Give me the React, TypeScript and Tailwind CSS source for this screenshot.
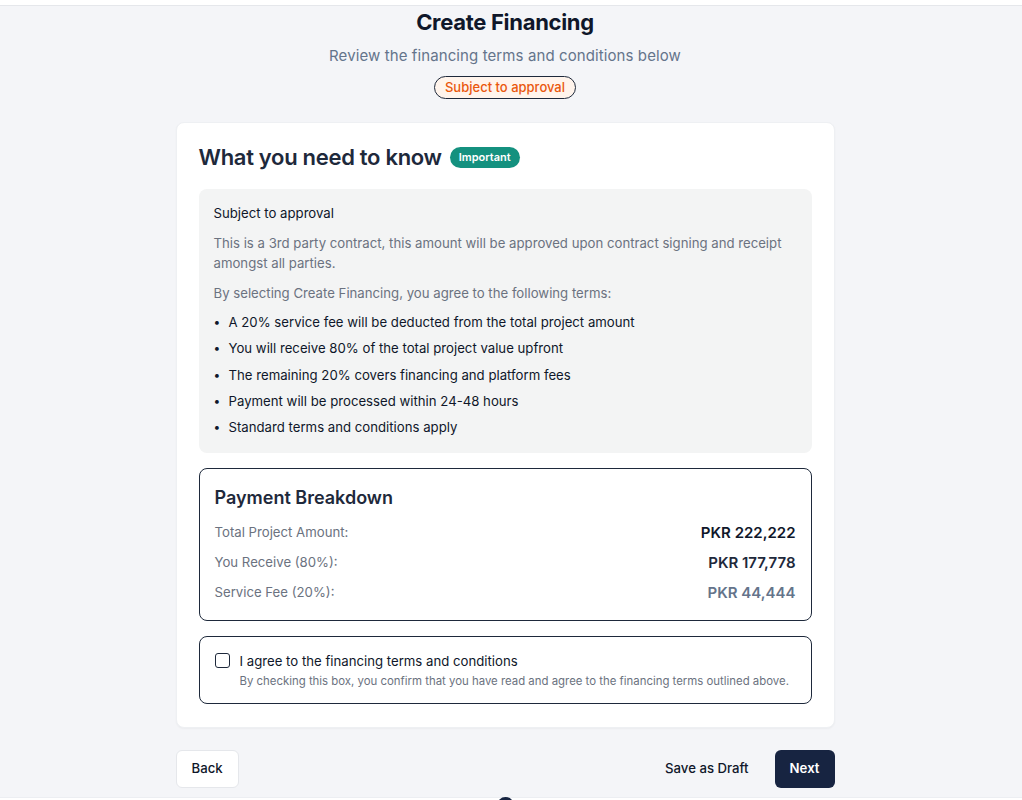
import React, { useState } from "react";

const terms = [
  "A 20% service fee will be deducted from the total project amount",
  "You will receive 80% of the total project value upfront",
  "The remaining 20% covers financing and platform fees",
  "Payment will be processed within 24-48 hours",
  "Standard terms and conditions apply",
];

const breakdown = [
  { label: "Total Project Amount:", value: "PKR 222,222", cls: "text-[#0f172a]" },
  { label: "You Receive (80%):", value: "PKR 177,778", cls: "text-[#1e293b]" },
  { label: "Service Fee (20%):", value: "PKR 44,444", cls: "text-[#64748b]" },
];

export default function App() {
  const [agreed, setAgreed] = useState(false);

  return (
    <div
      className="w-full h-[800px] overflow-hidden flex flex-col bg-[#f4f5f8]"
      style={{ fontFamily: "Inter, 'Noto Sans', sans-serif" }}
    >
      {/* Top bar */}
      <div className="h-[6px] bg-white border-b border-[#e5e7eb] shrink-0" />

      <div className="w-[1010px] flex flex-col items-center flex-1">
        {/* Header */}
        <h1 className="mt-[2px] text-[22px] leading-[28px] font-bold tracking-[-0.3px] text-[#0f172a]">
          Create Financing
        </h1>
        <p className="mt-[10px] text-[15px] leading-[20px] tracking-[0.1px] text-[#64748b]">
          Review the financing terms and conditions below
        </p>
        <span className="mt-[10px] h-[23px] px-[10px] flex items-center rounded-full border border-[#1e293b] bg-[#fff4ec] text-[13px] font-medium text-[#ea580c]">
          Subject to approval
        </span>

        {/* Card */}
        <div className="mt-[23px] w-[659px] bg-white rounded-lg border border-[#eef0f3] shadow-[0_1px_2px_rgba(0,0,0,0.04)] px-[22px] pt-[20px] pb-[23px]">
          <div className="flex items-center gap-[8px]">
            <h2 className="text-[22px] leading-[28px] font-semibold tracking-[-0.3px] text-[#1e293b]">
              What you need to know
            </h2>
            <span className="h-[21px] px-[9px] flex items-center rounded-full bg-[#14917f] text-white text-[11px] font-semibold">
              Important
            </span>
          </div>

          {/* Info box */}
          <div className="mt-[18px] bg-[#f3f4f4] rounded-lg px-[15px] pt-[15px] pb-[16px]">
            <p className="text-[13.2px] leading-[18px] text-[#0f172a]">Subject to approval</p>
            <p className="mt-[11px] text-[13.2px] leading-[20px] text-[#6b7280]">
              This is a 3rd party contract, this amount will be approved upon contract signing and receipt
              amongst all parties.
            </p>
            <p className="mt-[10px] text-[13.2px] leading-[20px] text-[#6b7280]">
              By selecting Create Financing, you agree to the following terms:
            </p>
            <ul className="mt-[9px] flex flex-col gap-[6.3px]">
              {terms.map((t) => (
                <li key={t} className="flex items-center text-[13.2px] leading-[20px] text-[#0f172a]">
                  <span className="w-[15px] text-[12px]">•</span>
                  <span>{t}</span>
                </li>
              ))}
            </ul>
          </div>

          {/* Payment Breakdown */}
          <div className="mt-[15px] border border-[#1e293b] rounded-lg px-[15px] pt-[17px] pb-[17px]">
            <h3 className="text-[18px] leading-[24px] font-semibold text-[#1e293b]">Payment Breakdown</h3>
            <div className="mt-[13px] flex flex-col gap-[10px]">
              {breakdown.map((r) => (
                <div key={r.label} className="flex items-center justify-between h-[20px]">
                  <span className="text-[13.2px] text-[#6b7280]">{r.label}</span>
                  <span className={`text-[15px] font-semibold ${r.cls}`}>{r.value}</span>
                </div>
              ))}
            </div>
          </div>

          {/* Agreement */}
          <div className="mt-[15px] border border-[#1e293b] rounded-lg px-[15px] pt-[15px] pb-[14px] flex gap-[10px]">
            <button
              onClick={() => setAgreed(!agreed)}
              className={`mt-[1px] w-[15px] h-[15px] shrink-0 rounded-[3px] border-[1.5px] border-[#1e293b] ${
                agreed ? "bg-[#1e293b]" : "bg-white"
              }`}
            />
            <div className="flex flex-col">
              <span className="text-[13.2px] leading-[18px] text-[#0f172a]">
                I agree to the financing terms and conditions
              </span>
              <span className="mt-[3px] text-[11.4px] leading-[16px] text-[#6b7280]">
                By checking this box, you confirm that you have read and agree to the financing terms outlined above.
              </span>
            </div>
          </div>
        </div>

        {/* Actions */}
        <div className="mt-[22px] w-[659px] flex items-center justify-between">
          <button className="h-[38px] px-[15px] rounded-md bg-white border border-[#e5e7eb] text-[13.2px] font-medium text-[#0f172a]">
            Back
          </button>
          <div className="flex items-center gap-[13px]">
            <button className="h-[38px] px-[13px] text-[13.2px] font-medium text-[#0f172a]">Save as Draft</button>
            <button className="h-[38px] px-[15px] rounded-md bg-[#172441] text-white text-[13.2px] font-semibold">
              Next
            </button>
          </div>
        </div>
      </div>

      {/* Bottom strip */}
      <div className="relative h-[3px] bg-white border-t border-[#eceef2] shrink-0">
        <div className="absolute left-[497px] top-[-1px] w-[17px] h-[17px] rounded-full bg-[#172441]" />
      </div>
    </div>
  );
}
